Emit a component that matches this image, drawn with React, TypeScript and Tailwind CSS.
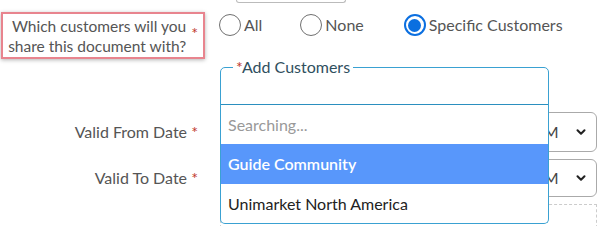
import { ChevronDown } from "lucide-react"

const RADIOS = [
  { label: "All", checked: false, className: "ml-[14px]" },
  { label: "None", checked: false, className: "ml-[38px]" },
  { label: "Specific Customers", checked: true, className: "ml-[40px]" },
]

function Radio({ checked }: { checked: boolean }) {
  if (checked) {
    return (
      <span className="flex h-[22px] w-[22px] items-center justify-center rounded-full border-2 border-[#0b6fe0] bg-white">
        <span className="h-[13px] w-[13px] rounded-full bg-[#0b6fe0]" />
      </span>
    )
  }
  return <span className="h-[22px] w-[22px] rounded-full border-[1.5px] border-[#707070] bg-white" />
}

function DateRow({ label, height }: { label: string; height: string }) {
  return (
    <div className={`flex items-center ${height}`}>
      <div className="w-[205px] pr-[7px] text-right">
        {label} <span className="text-[#c0392b]">*</span>
      </div>
      <div className="ml-[15px] flex h-full flex-1 gap-2 pr-[10px]">
        <div className="h-full flex-1 rounded-md border border-[#bbb]" />
        <div className="flex h-full w-[97px] items-center justify-between rounded-md border border-[#aaa] pl-[32px] pr-[8px] text-[#444]">
          <span>AM</span>
          <ChevronDown className="h-[14px] w-[14px] text-[#222]" strokeWidth={3.5} />
        </div>
      </div>
    </div>
  )
}

export default function App() {
  return (
    <div className="relative h-[226px] w-[607px] overflow-hidden bg-white font-['Lato',sans-serif] text-[16px] text-[#555]">
      {/* bottom of the field above */}
      <div className="ml-[236px] h-[3px] w-[110px] rounded-b-md border border-t-0 border-[#bbb]" />

      {/* share question */}
      <div className="mt-[9px] flex items-start">
        <div className="ml-px flex h-[47px] w-[204px] items-center justify-end border-2 border-[#e8848e] pr-[5px] leading-[20px] shadow-[0_1px_4px_rgba(0,0,0,0.3)]">
          <div className="whitespace-nowrap text-right text-[15.5px]">
            Which customers will you
            <br />
            share this document with?
          </div>
          <span className="mb-[6px] ml-[5px] text-[#c0392b]">*</span>
        </div>
        <div className="mt-[1px] flex items-center">
          {RADIOS.map((r) => (
            <label key={r.label} className={`flex items-center gap-[3px] ${r.className}`}>
              <Radio checked={r.checked} />
              <span>{r.label}</span>
            </label>
          ))}
        </div>
      </div>

      {/* add customers */}
      <div className="relative ml-[220px] mt-[8px] h-[38px] w-[329px] rounded-t-[5px] border border-[#3aa1d2]">
        <span className="absolute -top-[11px] left-[12px] bg-white px-[3px] leading-[20px] text-[#2f4f5e]">
          <span className="text-[#c0392b]">*</span>Add Customers
        </span>
        <div className="absolute -left-px -right-px top-full z-10 rounded-b-[5px] border border-t-0 border-[#3aa1d2] bg-white">
          <div className="flex h-[40px] items-center border-t border-[#2b8fbf] px-[7px] text-[#999]">Searching...</div>
          <div className="flex h-[40px] items-center bg-[#5897fb] px-[7px] font-semibold text-white">Guide Community</div>
          <div className="flex h-[39px] items-center px-[7px] text-[#222]">Unimarket North America</div>
        </div>
      </div>

      {/* dates */}
      <div className="mt-[7px] flex flex-col gap-[7px]">
        <DateRow label="Valid From Date" height="h-[40px]" />
        <DateRow label="Valid To Date" height="h-[38px]" />
        <div className="ml-[220px] mr-[10px] h-[40px] border border-dashed border-[#ccc]" />
      </div>
    </div>
  )
}
